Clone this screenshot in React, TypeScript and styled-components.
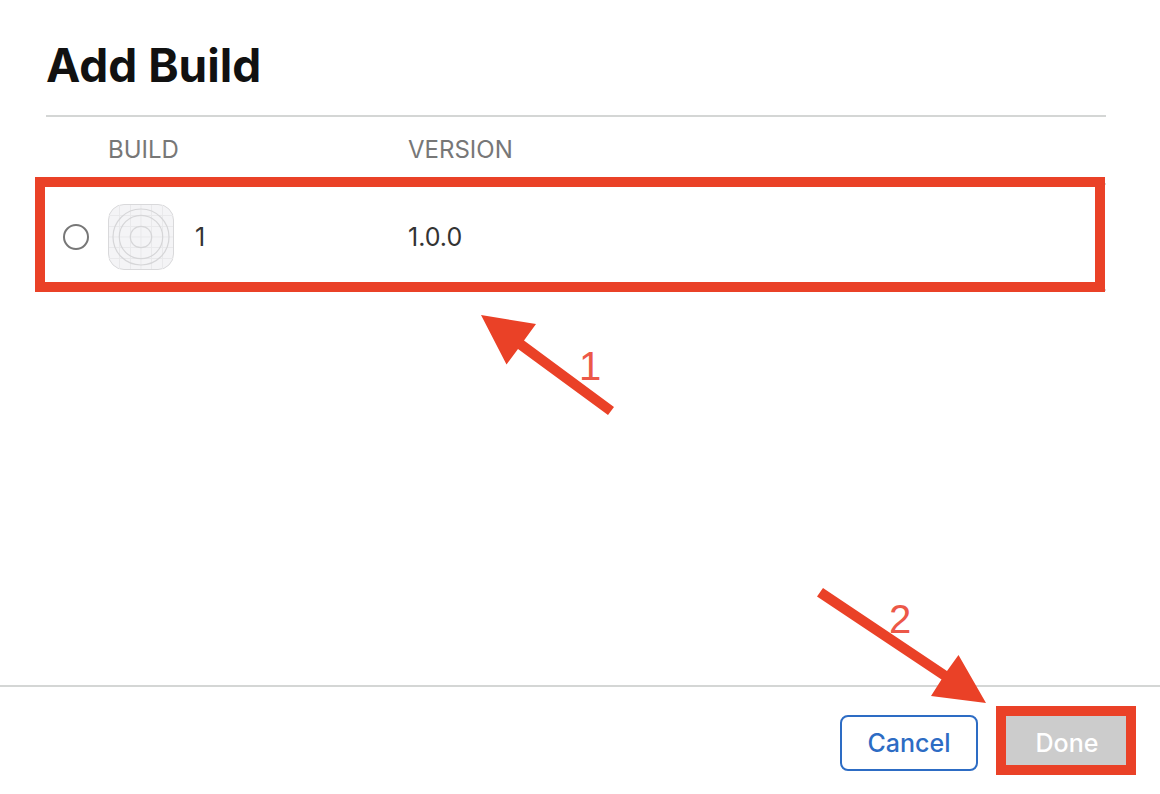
import React, { useState } from "react";
import styled, { createGlobalStyle } from "styled-components";

const red = "#ea4127";
const rule = "#d4d6d5";

const GlobalStyle = createGlobalStyle`
  *, *::before, *::after { box-sizing: border-box; }
  body {
    margin: 0;
    background: #fff;
    color: #333;
    font-family: Inter, "Liberation Sans", sans-serif;
  }
`;

const Dialog = styled.form`
  display: flex;
  flex-direction: column;
  min-height: 100vh;
`;

const Content = styled.main`
  flex: 1;
  padding: 37px 54px 40px 46px;
`;

const Title = styled.h1`
  margin: 0;
  padding-bottom: 22px;
  border-bottom: 2px solid ${rule};
  color: #111;
  font-size: 46px;
  line-height: 56px;
  font-weight: 700;
`;

const TableArea = styled.div`
  position: relative;
`;

const BuildTable = styled.table`
  width: 100%;
  table-layout: fixed;
  border-collapse: separate;
  border-spacing: 0;
  text-align: left;
`;

const Column = styled.col<{ $width?: number }>`
  width: ${({ $width }) => ($width ? `${$width}px` : "auto")};
`;

const HeadCell = styled.th`
  height: 68px;
  padding: 0;
  border-bottom: 2px solid ${rule};
  color: #777;
  font-size: 24px;
  line-height: 32px;
  font-weight: 400;
`;

const Cell = styled.td`
  height: 106px;
  padding: 0;
  border-bottom: 2px solid ${rule};
  font-size: 25px;
  line-height: 32px;
`;

const Radio = styled.input`
  appearance: none;
  display: block;
  width: 26px;
  height: 26px;
  margin: 0 0 0 17px;
  border: 2px solid #777;
  border-radius: 50%;
  background: #fff;

  &:checked {
    border: 8px solid #2d6cc4;
  }
`;

const BuildLabel = styled.label`
  display: flex;
  align-items: center;
  gap: 21px;
`;

const Footer = styled.footer`
  display: flex;
  justify-content: flex-end;
  gap: 20px;
  padding: 28px 24px 23px;
  border-top: 2px solid ${rule};
`;

const Button = styled.button`
  width: 138px;
  height: 56px;
  padding: 0;
  border: 2px solid #2d6cc4;
  border-radius: 8px;
  background: #fff;
  color: #2d6cc4;
  font-family: inherit;
  font-size: 25px;
  line-height: 32px;
  font-weight: 500;

  &:disabled {
    border-color: #ccc;
    background: #ccc;
    color: #fff;
  }
`;

const DoneArea = styled.div`
  position: relative;
`;

const Highlight = styled.div<{ $inset: string }>`
  position: absolute;
  inset: ${({ $inset }) => $inset};
  border: 10px solid ${red};
  pointer-events: none;
`;

const Callout = styled.div<{ $place: string }>`
  position: absolute;
  ${({ $place }) => $place}
  pointer-events: none;

  svg {
    display: block;
    overflow: visible;
  }
`;

const StepNumber = styled.span<{ $place: string }>`
  position: absolute;
  ${({ $place }) => $place}
  color: #ec5848;
  font-family: "Liberation Sans", sans-serif;
  font-size: 40px;
  line-height: 44px;
`;

const AppIcon = () => (
  <svg width="66" height="66" viewBox="0 0 66 66" fill="none" aria-hidden="true">
    <rect x=".5" y=".5" width="65" height="65" rx="15.5" fill="#f4f4f6" stroke="#d9d9db" />
    <path
      d="M11.5 1V65M22.5 1V65M33 1V65M43.5 1V65M54.5 1V65M1 11.5H65M1 22.5H65M1 33H65M1 43.5H65M1 54.5H65"
      stroke="#e9e9eb"
    />
    <g stroke="#d6d6d8" strokeWidth="1.2">
      <circle cx="33" cy="33" r="28" />
      <circle cx="33" cy="33" r="21.7" />
      <circle cx="33" cy="33" r="10.7" />
    </g>
  </svg>
);

export default function App() {
  const [selected, setSelected] = useState(false);

  return (
    <>
      <GlobalStyle />
      <Dialog onSubmit={(e: React.FormEvent) => e.preventDefault()}>
        <Content>
          <Title>Add Build</Title>
          <TableArea>
            <BuildTable>
              <colgroup>
                <Column $width={62} />
                <Column $width={300} />
                <Column />
              </colgroup>
              <thead>
                <tr>
                  <HeadCell />
                  <HeadCell scope="col">BUILD</HeadCell>
                  <HeadCell scope="col">VERSION</HeadCell>
                </tr>
              </thead>
              <tbody>
                <tr>
                  <Cell>
                    <Radio
                      type="radio"
                      name="build"
                      id="build-1"
                      checked={selected}
                      onChange={() => setSelected(true)}
                    />
                  </Cell>
                  <Cell>
                    <BuildLabel htmlFor="build-1">
                      <AppIcon />1
                    </BuildLabel>
                  </Cell>
                  <Cell>1.0.0</Cell>
                </tr>
              </tbody>
            </BuildTable>
            <Highlight $inset="60px 1px -1px -11px" />
            <Callout $place="left: 435px; top: 198px;">
              <StepNumber $place="left: 98px; top: 29px;">1</StepNumber>
              <svg width="133" height="100" viewBox="0 0 133 100" aria-hidden="true">
                <path d="M0 0L55 9L43 25.5L133 92L127 100L37 34L25.5 49.5Z" fill={red} />
              </svg>
            </Callout>
          </TableArea>
        </Content>
        <Footer>
          <Button type="button">Cancel</Button>
          <DoneArea>
            <Button type="submit" disabled={!selected}>
              Done
            </Button>
            <Highlight $inset="-9px 0 -4px -2px" />
            <Callout $place="right: 150px; bottom: 68px;">
              <StepNumber $place="left: 72px; top: 9px;">2</StepNumber>
              <svg width="169" height="115" viewBox="0 0 169 115" aria-hidden="true">
                <path d="M6 0L130 83L141.5 67L169 115L114 108L124.5 91.5L0 8.5Z" fill={red} />
              </svg>
            </Callout>
          </DoneArea>
        </Footer>
      </Dialog>
    </>
  );
}
